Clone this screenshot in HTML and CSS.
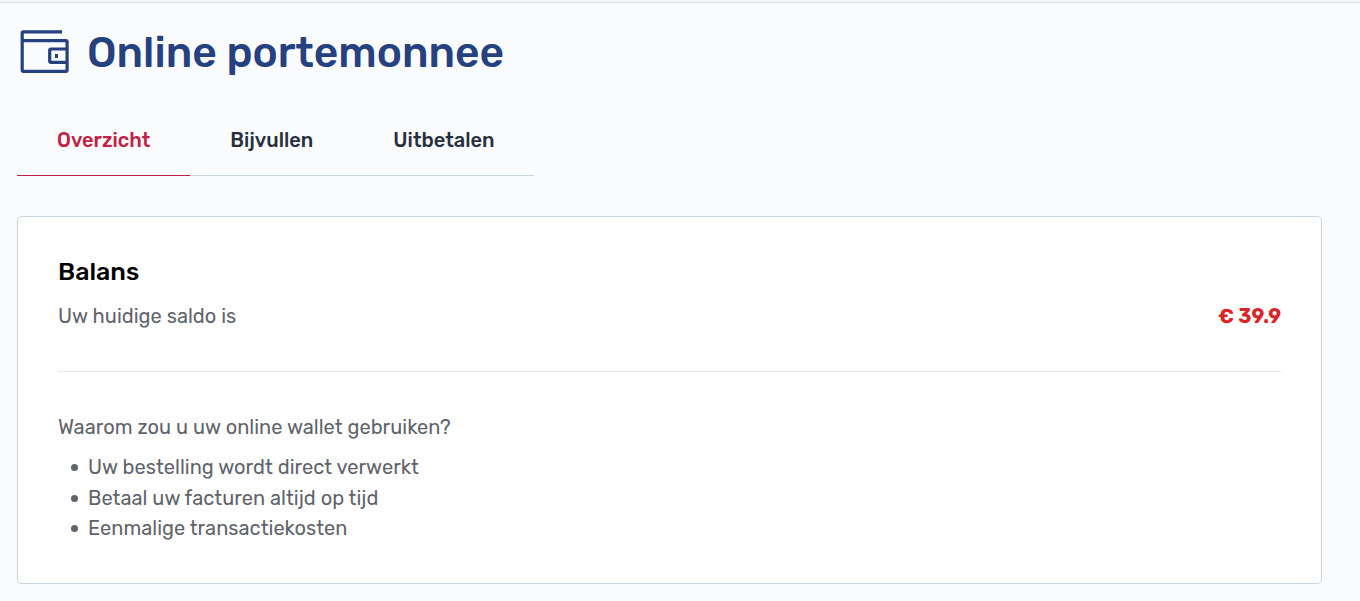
FILE: index.html
```html
<!DOCTYPE html>
<html lang="nl">

<head>
    <meta charset="UTF-8">
    <title>Online portemonnee</title>
    <link rel="stylesheet" href="styles.css">
</head>

<body>
    <div class="wallet">
        <div class="heading">
            <svg class="icon" viewBox="20 29 50 46">
                <path d="M62 31.9H23.4Q22.2 31.9 22.2 33.1V70Q22.2 71.3 23.4 71.3H65.9Q67.1 71.3 67.1 70V42Q67.1 40.7 65.9 40.7H22.2" />
                <path d="M67.1 49H51Q49.7 49 49.7 50.3V61Q49.7 62.3 51 62.3H67.1" />
                <rect class="dot" x="55" y="54" width="3" height="4" />
            </svg>
            <h1>Online portemonnee</h1>
        </div>
        <ul class="tabs">
            <li class="active">Overzicht</li>
            <li>Bijvullen</li>
            <li>Uitbetalen</li>
        </ul>
        <div class="card">
            <h2>Balans</h2>
            <div class="balance">
                <span>Uw huidige saldo is</span>
                <strong class="amount">€ 39.9</strong>
            </div>
            <p class="why">Waarom zou u uw online wallet gebruiken?</p>
            <ul class="reasons">
                <li>Uw bestelling wordt direct verwerkt</li>
                <li>Betaal uw facturen altijd op tijd</li>
                <li>Eenmalige transactiekosten</li>
            </ul>
        </div>
    </div>
</body>

</html>
```

FILE: styles.css
```css
* {
    margin: 0;
    padding: 0;
    box-sizing: border-box;
}

body {
    height: 601px;
    overflow: hidden;
    background: #fafbfd;
    border-top: 2px solid #f5f5f5;
    font-family: Rubik, Roboto, sans-serif;
    font-size: 20px;
    line-height: 30px;
    color: #5f636b;
}

.wallet {
    border-top: 1px solid #dcdde0;
    padding: 0 38px 0 17px;
}

.heading {
    display: flex;
    height: 102px;
    padding: 26px 0 0 3px;
}

.heading .icon {
    width: 50px;
    height: 46px;
    margin-right: 17px;
    fill: none;
    stroke: #25417f;
    stroke-width: 3.2;
}

.heading .dot {
    fill: #25417f;
    stroke: none;
}

.heading h1 {
    font-size: 42.55px;
    line-height: 48px;
    font-weight: 500;
    white-space: nowrap;
    color: #25417f;
}

.tabs {
    display: flex;
    width: 517px;
    height: 71px;
    list-style: none;
    font-weight: 500;
    color: #28303f;
}

.tabs li {
    padding: 20px 40px 0;
    white-space: nowrap;
    border-bottom: 1px solid #c9d6df;
}

.tabs li:last-child {
    padding-right: 39px;
}

.tabs .active {
    color: #c22045;
    border-color: #c22045;
}

.card {
    height: 368px;
    margin-top: 40px;
    padding: 39px 40px 0;
    background: #fff;
    border: 1px solid #c9d6df;
    border-radius: 5px;
}

.card h2 {
    font-size: 25px;
    line-height: 32px;
    font-weight: 500;
    color: #000;
}

.balance {
    display: flex;
    justify-content: space-between;
    height: 84px;
    padding-top: 13px;
    letter-spacing: 0.03px;
    border-bottom: 1px solid #e4e6e8;
}

.amount {
    font-weight: 700;
    letter-spacing: 0;
    color: #db2427;
}

.why {
    margin-top: 40px;
    letter-spacing: 0.03px;
}

.reasons {
    margin-top: 10px;
    padding-left: 30px;
    list-style: none;
    line-height: 30.5px;
    letter-spacing: 0.03px;
}

.reasons li {
    display: flex;
    align-items: center;
}

.reasons li::before {
    content: "";
    width: 7px;
    height: 7px;
    margin: 1px 10px 0 -17px;
    border-radius: 50%;
    background: #5f636b;
}
```
